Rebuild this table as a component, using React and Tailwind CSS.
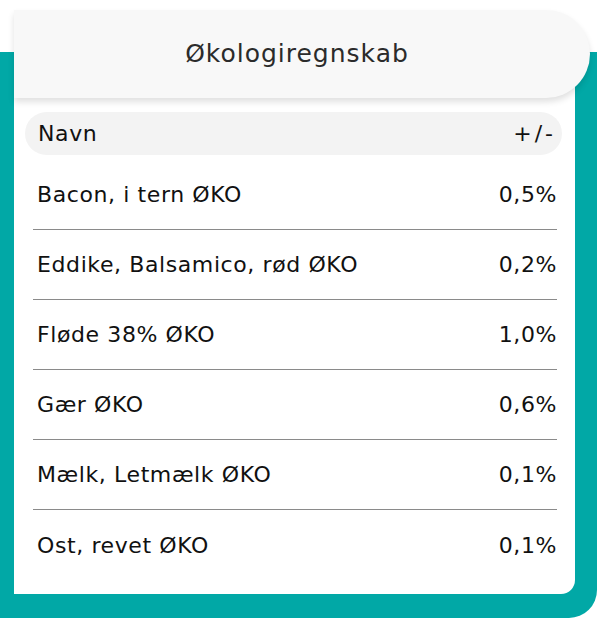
const rows = [
  { name: 'Bacon, i tern ØKO', value: '0,5%' },
  { name: 'Eddike, Balsamico, rød ØKO', value: '0,2%' },
  { name: 'Fløde 38% ØKO', value: '1,0%' },
  { name: 'Gær ØKO', value: '0,6%' },
  { name: 'Mælk, Letmælk ØKO', value: '0,1%' },
  { name: 'Ost, revet ØKO', value: '0,1%' },
]

export default function App() {
  return (
    <div className="w-[600px] h-[618px] bg-white overflow-hidden pt-[52px] font-['DejaVu_Sans',sans-serif] text-[#111]">
      <div className="w-[597px] h-[566px] bg-[#01a8a6] rounded-br-[28px] pl-[14px]">
        <div className="relative -top-[42px] w-[561px] h-[584px] bg-white rounded-br-[14px]">
          <div className="w-[576px] h-[88px] bg-[#f8f8f8] rounded-r-[44px] shadow-[0_4px_6px_rgba(0,0,0,0.12)] flex items-center justify-center pr-[10px]">
            <h1 className="text-[25px] tracking-[1px] text-[#2b2b2b]">Økologiregnskab</h1>
          </div>

          <div className="mt-[14px] ml-[11px] mr-[13px] h-[43px] rounded-full bg-[#f3f3f3] flex items-center justify-between pl-[13px] pr-[6px] text-[22px] tracking-[0.6px]">
            <span>Navn</span>
            <span className="tracking-[3px]">+/-</span>
          </div>

          <div className="mt-[5px] ml-[19px] mr-[18px]">
            {rows.map((r, i) => (
              <div
                key={r.name}
                className={
                  'h-[70px] flex items-center justify-between text-[22px] tracking-[0.6px] ' +
                  (i < rows.length - 1 ? 'border-b border-[#8a8a8a]' : '')
                }
              >
                <span className="pl-[4px]">{r.name}</span>
                <span>{r.value}</span>
              </div>
            ))}
          </div>
        </div>
      </div>
    </div>
  )
}
